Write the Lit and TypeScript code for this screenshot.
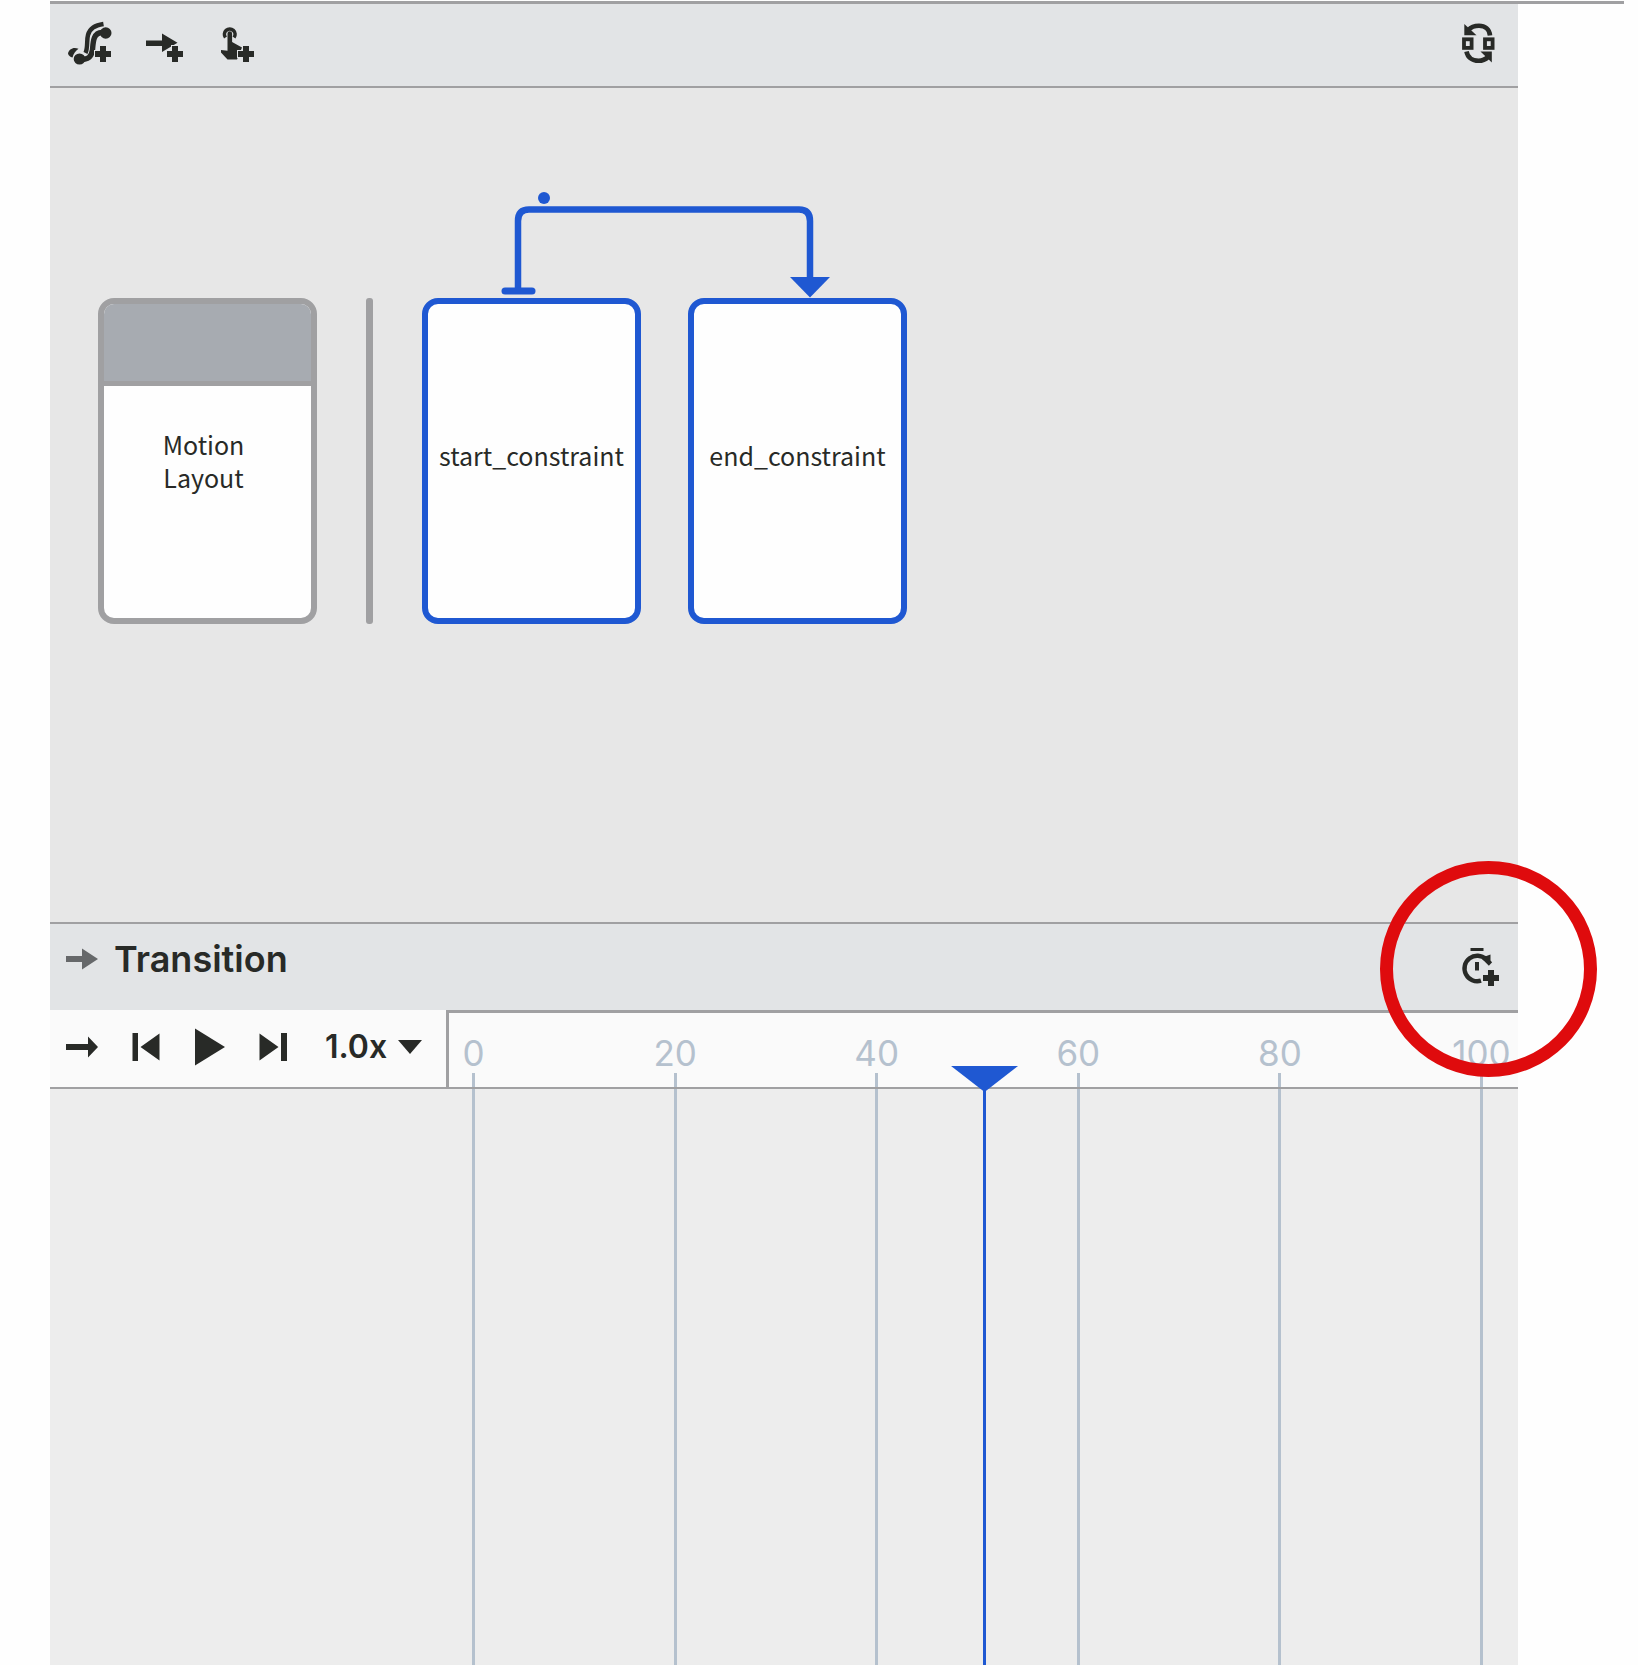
import { LitElement, html, css, svg } from "lit";
import { customElement, state } from "lit/decorators.js";

const plus = (x: number, y: number) => svg`
  <path class="plus" d="M${x - 3} ${y - 8}h6v5h5v6h-5v5h-6v-5h-5v-6h5z" />`;

const iconConstraintSet = html`<svg class="icon" viewBox="0 0 48 48" aria-hidden="true">
  <path class="line" stroke-width="4.4" d="M19.5 32C22 27 20.5 19 22 14C24 7 29 4.5 37.5 3" />
  <path class="line" stroke-width="5.4" d="M13 38.5C22 39 25.5 36 26.5 29C27.2 21 27 12 36 11.5" />
  <ellipse cx="13.5" cy="38" rx="5.8" ry="5.6" />
  <circle cx="39.700" cy="12" r="5.800" />
  <path d="M2 32.500C3 28 7.500 25.500 12.500 27.800C9.500 30 7.500 32.500 6.500 36.500C4 36 2.500 34.500 2 32.500z" />
  ${plus(37, 33)}
</svg>`;

const iconTransition = html`<svg class="icon" viewBox="0 0 48 48" aria-hidden="true">
  <path d="M6 19.500H22V12.500L37.500 21.700L22 31V25H6z" />
  ${plus(35, 33)}
</svg>`;

const iconClick = html`<svg class="icon" viewBox="0 0 48 48" aria-hidden="true">
  <path class="line" stroke-width="3.600" d="M11.500 16.500A5.300 5.300 0 1 1 20 16.500" />
  <path d="M13.500 12.500a2.300 2.300 0 0 1 4.600 0V21L28 26.500L23 38.500H13.500L7 31.500V29L13.500 29.800z" />
  ${plus(32, 33)}
</svg>`;

const iconCycle = html`<svg class="icon" viewBox="0 0 48 48" aria-hidden="true">
  <path class="line" stroke-width="4.600" d="M36 14.500C35.500 8 31 4.800 25 4.800C20.500 4.800 17 6 14.500 9" />
  <path d="M10.300 3V14.300H22.500z" />
  <path class="line" stroke-width="4.600" d="M12.500 30.500C13.500 36 18 39.800 24.500 39.800C28.500 39.800 31.500 38.500 34 36" />
  <path d="M37.800 41.500V30.500H26.500z" />
  <rect class="line" stroke-width="3.800" x="10" y="18.300" width="7.600" height="8.600" />
  <rect class="line" stroke-width="3.800" x="31" y="18.300" width="7.600" height="8.600" />
</svg>`;

const iconTimer = html`<svg class="icon" viewBox="0 0 48 48" aria-hidden="true">
  <path class="line" stroke-width="3" d="M16.500 6.500H29.500" />
  <path class="line" stroke-width="4.400" d="M27 37.600A12.700 12.700 0 1 1 32 16.300" />
  <path class="line" stroke-width="4.600" d="M30 14.500L36.500 21" />
  <path d="M31 13.500l5.500-2v6.500z" />
  <path class="line" stroke-width="4" d="M23 19V27.500" />
  ${plus(37, 35)}
</svg>`;

const iconArrow = html`<svg class="glyph" viewBox="0 0 32 32" aria-hidden="true">
  <path d="M0 13H22V5.500L32 16L22 26.500V19H0z" />
</svg>`;
const iconTitleArrow = html`<svg class="glyph muted" viewBox="0 0 32 32" aria-hidden="true">
  <path d="M0 13H16V5.500L32 16L16 26.500V19H0z" />
</svg>`;
const iconStart = html`<svg class="glyph" viewBox="0 0 32 32" aria-hidden="true">
  <path d="M2.500 2H8V30H2.500zM29.500 2.500V29.500L10.500 16z" />
</svg>`;
const iconPlay = html`<svg class="glyph tall" viewBox="0 0 32 40" aria-hidden="true">
  <path d="M1 1.500L31 20L1 38.500z" />
</svg>`;
const iconEnd = html`<svg class="glyph" viewBox="0 0 32 32" aria-hidden="true">
  <path d="M1.500 2.500V29.500L20.500 16zM23 2H29V30H23z" />
</svg>`;

const TICKS = [0, 20, 40, 60, 80, 100];
const SPEEDS = ["0.25x", "0.5x", "1.0x", "2.0x", "4.0x"];

@customElement("app-root")
export class AppRoot extends LitElement {
  @state() private progress = 50.7;

  static styles = css`
    :host {
      --ink: #282a27;
      --rule: #a0a0a2;
      --blue: #1f58d2;
      --scale: #b5c1ce;
      display: block;
      background: #fefefe;
      color: var(--ink);
      font-family: Inter, "Liberation Sans", sans-serif;
    }
    * {
      box-sizing: border-box;
    }
    .page {
      position: relative;
      display: flex;
      flex-direction: column;
      min-height: 100vh;
      padding: 1px 120px 0 50px;
    }
    .top-rule {
      height: 3px;
      margin-right: -106px;
      background: var(--rule);
    }
    button {
      display: flex;
      padding: 0;
      border: 0;
      background: none;
      color: inherit;
      cursor: pointer;
    }
    svg {
      display: block;
      fill: currentColor;
    }
    .icon {
      width: 48px;
      height: 48px;
    }
    .line {
      fill: none;
      stroke: currentColor;
    }
    .plus {
      stroke: #e2e4e6;
      stroke-width: 2px;
      paint-order: stroke;
    }
    .glyph {
      width: 32px;
      height: 32px;
    }
    .tall {
      height: 40px;
    }
    .muted {
      color: #66686a;
    }
    .toolbar {
      display: flex;
      align-items: center;
      gap: 26px;
      height: 84px;
      padding: 0 16px;
      border-bottom: 2px solid var(--rule);
      background: #e2e4e6;
    }
    .push {
      margin-left: auto;
    }
    .canvas {
      display: flex;
      align-items: flex-start;
      gap: 49px;
      height: 834px;
      padding: 210px 48px 0;
      background: #e7e7e7;
      font-family: "Noto Sans CJK SC", "Noto Sans", sans-serif;
      font-size: 25px;
      line-height: 33px;
      text-align: center;
    }
    .card {
      display: flex;
      flex-direction: column;
      width: 219px;
      height: 326px;
      border: 6px solid var(--rule);
      border-radius: 16px;
      background: #fefefe;
      overflow: hidden;
    }
    .card-head {
      height: 82px;
      border-bottom: 5px solid var(--rule);
      background: #a7abb1;
    }
    .card-text {
      padding: 42px 56px 0 48px;
    }
    .divider {
      width: 7px;
      height: 326px;
      border-radius: 3px;
      background: var(--rule);
    }
    .sets {
      position: relative;
      display: flex;
      gap: 47px;
    }
    .set {
      justify-content: center;
      align-items: center;
      padding-bottom: 12px;
      border-color: var(--blue);
      color: inherit;
      font: inherit;
    }
    .link {
      position: absolute;
      left: 0;
      bottom: 100%;
      width: 485px;
      height: 110px;
      color: var(--blue);
    }
    .header {
      display: flex;
      align-items: center;
      gap: 17px;
      height: 88px;
      padding: 0 16px;
      border-top: 2px solid var(--rule);
      background: #e2e4e6;
    }
    .title {
      display: flex;
      align-items: center;
      gap: 16px;
      padding-bottom: 16px;
    }
    h2 {
      margin: 0;
      font-size: 36px;
      font-weight: 600;
      line-height: 40px;
    }
    .timeline {
      flex: 1;
      display: grid;
      grid-template-columns: 396px 1fr;
      grid-template-rows: 79px 1fr;
      min-height: 400px;
      background: #ededed;
    }
    .controls {
      display: flex;
      align-items: center;
      gap: 32px;
      padding: 0 16px 4px;
      border-bottom: 2px solid var(--rule);
      background: #fafafa;
    }
    .speed {
      position: relative;
      display: flex;
      align-items: center;
      margin-left: 3px;
    }
    select {
      width: 98px;
      padding: 0;
      border: 0;
      appearance: none;
      background: none;
      color: inherit;
      font: 600 32px/40px Inter, "Liberation Sans", sans-serif;
    }
    .caret {
      position: absolute;
      right: 1px;
      width: 24px;
      height: 14px;
      pointer-events: none;
    }
    .scale {
      position: relative;
      grid-column: 2;
      grid-row: 1 / 3;
      display: flex;
      flex-direction: column;
    }
    .ruler {
      height: 79px;
      padding: 20px 35px 0 23px;
      border: solid var(--rule);
      border-width: 3px 0 2px 3px;
      background: #fafafa;
      display: flex;
      justify-content: space-between;
    }
    .tick {
      display: flex;
      flex-direction: column;
      align-items: center;
      justify-content: space-between;
      width: 3px;
      color: var(--scale);
      font-size: 35px;
      line-height: 40px;
      white-space: nowrap;
    }
    .tick::after {
      content: "";
      width: 3px;
      height: 14px;
      background: var(--scale);
    }
    .grid {
      flex: 1;
      display: flex;
      justify-content: space-between;
      padding: 0 35px 0 26px;
    }
    .grid-line {
      width: 3px;
      background: var(--scale);
    }
    .playhead {
      position: absolute;
      inset: 79px 37px 0 27px;
      pointer-events: none;
    }
    .playhead-line {
      position: absolute;
      top: -2px;
      bottom: 0;
      width: 3px;
      margin-left: -1px;
      background: var(--blue);
    }
    .scrub {
      position: absolute;
      top: 56px;
      left: -6px;
      width: calc(100% + 3px);
      height: 26px;
      margin: 0;
      appearance: none;
      background: none;
    }
    .scrub::-webkit-slider-thumb {
      appearance: none;
      width: 67px;
      height: 26px;
      background: var(--blue);
      clip-path: polygon(0 0, 100% 0, 50% 100%);
    }
    .marker {
      position: absolute;
      top: 861px;
      right: 41px;
      width: 217px;
      height: 216px;
      border: 13px solid #df0b0d;
      border-radius: 50%;
      pointer-events: none;
    }
  `;

  private scrub(e: Event) {
    this.progress = Number((e.target as HTMLInputElement).value);
  }

  render() {
    return html`<main class="page">
      <div class="top-rule"></div>
      <div class="toolbar">
        <button aria-label="Create ConstraintSet">${iconConstraintSet}</button>
        <button aria-label="Create transition">${iconTransition}</button>
        <button aria-label="Create click handler">${iconClick}</button>
        <button class="push" aria-label="Cycle layouts">${iconCycle}</button>
      </div>

      <section class="canvas">
        <div class="card">
          <div class="card-head"></div>
          <div class="card-text">Motion Layout</div>
        </div>
        <div class="divider"></div>
        <div class="sets">
          <button class="card set">start_constraint</button>
          <button class="card set">end_constraint</button>
          <svg class="link" viewBox="0 0 485 110" aria-hidden="true">
            <path class="line" stroke-width="6.5" d="M96 102V33Q96 21.500 107 21.500H377Q388 21.500 388 33V92" />
            <path class="line" stroke-width="7" stroke-linecap="round" d="M83 103H110" />
            <path d="M368 89H408L388 109.500z" />
            <circle cx="122" cy="10" r="6" />
          </svg>
        </div>
      </section>

      <header class="header">
        <div class="title">${iconTitleArrow}<h2>Transition</h2></div>
        <button class="push" aria-label="Create KeyFrames">${iconTimer}</button>
      </header>

      <section class="timeline">
        <div class="controls">
          <button aria-label="Play direction">${iconArrow}</button>
          <button aria-label="Jump to start">${iconStart}</button>
          <button aria-label="Play">${iconPlay}</button>
          <button aria-label="Jump to end">${iconEnd}</button>
          <div class="speed">
            <select aria-label="Playback speed">
              ${SPEEDS.map((s) => html`<option ?selected=${s === "1.0x"}>${s}</option>`)}
            </select>
            <svg class="caret" viewBox="0 0 24 14" aria-hidden="true"><path d="M0 0H24L12 14z" /></svg>
          </div>
        </div>
        <div class="scale">
          <div class="ruler">${TICKS.map((t) => html`<div class="tick">${t}</div>`)}</div>
          <div class="grid">${TICKS.map(() => html`<div class="grid-line"></div>`)}</div>
          <div class="playhead">
            <div class="playhead-line" style="left:${this.progress}%"></div>
          </div>
          <input
            class="scrub"
            type="range"
            min="0"
            max="100"
            step="0.1"
            aria-label="Timeline position"
            .value=${String(this.progress)}
            @input=${this.scrub}
          />
        </div>
      </section>
      <div class="marker"></div>
    </main>`;
  }
}
